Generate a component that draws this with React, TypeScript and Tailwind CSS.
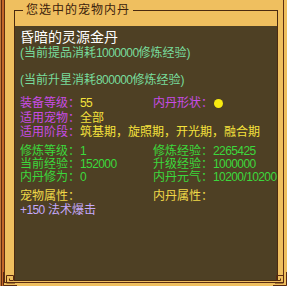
import type { ReactNode } from 'react';

const Num = ({ children }: { children: ReactNode }) => (
    <span className="tracking-[-0.6px]">{children}</span>
);

const Field = ({ label, value, labelClass, valueClass }: { label: string; value?: ReactNode; labelClass: string; valueClass?: string }) => (
    <div className="whitespace-nowrap">
        <span className={labelClass}>{label}：</span>
        {value !== undefined && <span className={valueClass}>{value}</span>}
    </div>
);

const Fret = ({ flip }: { flip?: boolean }) => (
    <svg width="14" height="14" viewBox="0 0 14 14" className={flip ? '-scale-x-100' : ''}>
        <path
            d="M0.5 0 V13.5 H14 M3.5 11 V3.5 H10.5 V8.5 H6.5 V6.5 M3.5 11 H12"
            fill="none"
            stroke="#5a2a10"
            strokeWidth="1"
        />
    </svg>
);

export default function App() {
    return (
        <div className="relative flex h-[286px] w-[287px] overflow-hidden bg-[#efbf5f] font-['Liberation_Sans','Noto_Sans_CJK_SC',sans-serif] text-[12px]">
            <div className="w-px bg-[#c27a3a]" />
            <div className="w-px bg-[#5e2a10]" />
            <div className="w-[2px] bg-[#c4662a]" />
            <div className="mb-[3px] mr-[3px] flex-1 border-x border-b border-[#5e2e12] pl-[9px] pr-[5px]">
                <fieldset className="mt-[3px] border border-[#4a2a10]">
                    <legend className="ml-[8px] px-[3px] leading-[14px] tracking-[1px] text-[#3c220c]">您选中的宠物内丹</legend>
                    <div className="h-[9px]" />
                    <div className="h-[254px] bg-[#4e4024] pl-[5px] pt-[3px]">
                        <div className="text-[14px] leading-[16px] text-white">昏暗的灵源金丹</div>
                        <div className="mt-[1px] leading-[14px] text-[#78dc9c]">
                            (当前提品消耗<Num>1000000</Num>修炼经验)
                        </div>
                        <div className="mt-[13px] leading-[14px] text-[#78dc9c]">
                            (当前升星消耗<Num>800000</Num>修炼经验)
                        </div>

                        <div className="mt-[9px] grid grid-cols-[133px_1fr] leading-[14px]">
                            <Field label="装备等级" value={<Num>55</Num>} labelClass="text-[#c84ce6]" valueClass="text-[#f5e23c]" />
                            <div className="flex items-center whitespace-nowrap">
                                <span className="text-[#c84ce6]">内丹形状：</span>
                                <span className="ml-px inline-block h-[9px] w-[9px] rounded-full bg-[#f8ea10]" />
                            </div>
                        </div>
                        <div className="mt-[1px] leading-[14px]">
                            <Field label="适用宠物" value="全部" labelClass="text-[#c84ce6]" valueClass="text-[#f5e23c]" />
                            <Field label="适用阶段" value="筑基期，旋照期，开光期，融合期" labelClass="text-[#c84ce6]" valueClass="text-[#f5e23c]" />
                        </div>

                        <div className="mt-[6px] grid grid-cols-[133px_1fr] leading-[13px] text-[#3cd83c]">
                            <Field label="修炼等级" value={<Num>1</Num>} labelClass="" />
                            <Field label="修炼经验" value={<Num>2265425</Num>} labelClass="" />
                            <Field label="当前经验" value={<Num>152000</Num>} labelClass="" />
                            <Field label="升级经验" value={<Num>1000000</Num>} labelClass="" />
                            <Field label="内丹修为" value={<Num>0</Num>} labelClass="" />
                            <Field label="内丹元气" value={<Num>10200/10200</Num>} labelClass="" />
                        </div>

                        <div className="mt-[5px] grid grid-cols-[133px_1fr] leading-[14px] text-[#f0d848]">
                            <Field label="宠物属性" labelClass="" />
                            <Field label="内丹属性" labelClass="" />
                        </div>
                        <div className="leading-[14px] text-[#c4a8fa]">
                            <Num>+150</Num> 法术爆击
                        </div>
                    </div>
                </fieldset>
            </div>

            <div className="absolute bottom-0 left-[3px]">
                <Fret />
            </div>
            <div className="absolute bottom-0 right-0">
                <Fret flip />
            </div>
        </div>
    );
}
